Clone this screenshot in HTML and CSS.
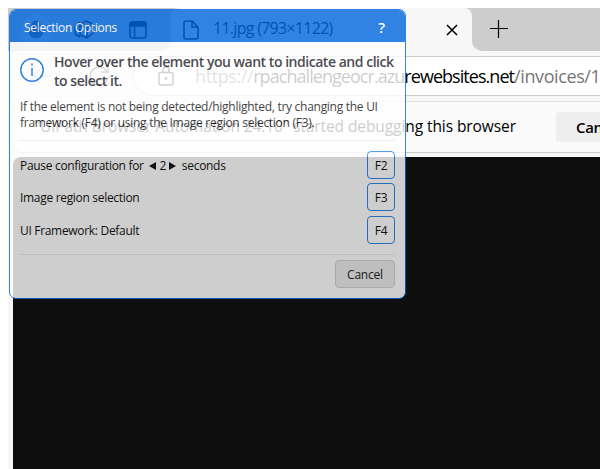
FILE: index.html
```html
<!DOCTYPE html>
<html lang="en">
<head>
<meta charset="utf-8">
<title>11.jpg (793×1122)</title>
<link rel="stylesheet" href="styles.css">
</head>
<body>
<main class="browser">
  <header class="tabs">
    <div class="tab-tools">
      <span class="avatar"><svg width="30" height="30" viewBox="0 0 30 30"><circle cx="15" cy="10" r="4.500"/><path d="M8 17q0-3 3-3h8q3 0 3 3c0 4-3 6-7 6s-7-2-7-6z"/></svg></span>
      <svg class="line-icon workspaces" width="22" height="22" viewBox="0 0 22 22"><path d="M7 6l6-4 7 3v9l-6 5-7-3zM7 6l7 3 6-4M14 9v10M2 7l5-4M2 7v8l5 3"/></svg>
      <svg class="line-icon" width="18" height="18" viewBox="0 0 18 18"><rect x="1" y="1" width="16" height="16" rx="2.500"/><path d="M1 3q0-2 2-2h12q2 0 2 2v2H1z" fill="currentColor"/><path d="M5.500 5v12"/></svg>
    </div>
    <div class="tab">
      <svg class="line-icon" width="16" height="20" viewBox="0 0 16 20"><path d="M3 1h6l6 6v10q0 2-2 2H3q-2 0-2-2V3q0-2 2-2zM9 1v6h6"/></svg>
      <span class="tab-title">11.jpg (793×1122)</span>
      <svg class="line-icon close" width="12" height="12" viewBox="0 0 12 12"><path d="M1 1l10 10M11 1L1 11"/></svg>
    </div>
    <div class="tab-rest"><svg class="line-icon" width="18" height="18" viewBox="0 0 18 18"><path d="M8.500 0v18M0 8.500h18"/></svg></div>
  </header>
  <nav class="toolbar">
    <svg class="line-icon back" width="20" height="16" viewBox="0 0 20 16"><path d="M19 8H1M8 1L1 8l7 7"/></svg>
    <svg class="line-icon reload" width="22" height="22" viewBox="0 0 22 22"><path d="M19 8A9 9 0 1 0 20 13M20 1v7h-7"/></svg>
    <div class="address">
      <svg class="line-icon" width="16" height="20" viewBox="0 0 16 20"><rect x="1" y="6.500" width="14" height="12.500" rx="2"/><path d="M5 6.500V4a3 3 0 0 1 6 0v2.500"/><circle cx="8" cy="12.500" r=".7"/></svg>
      <span class="url"><i>https://</i>rpachallengeocr.azurewebsites.net<i>/invoices/1</i></span>
    </div>
  </nav>
  <section class="infobar">
    <span class="info-text">"UiPath Browser Automation 24.10" started debugging this browser</span>
    <button class="info-cancel">Cancel</button>
  </section>
  <section class="viewport"></section>
</main>

<aside class="dialog">
  <header class="dialog-title"><span class="caption">Selection Options</span><span class="help">?</span></header>
  <div class="dialog-body">
    <div class="lead">
      <svg width="24" height="24" viewBox="0 0 24 24"><circle cx="12" cy="12" r="11.200"/><path d="M12 10v8M12 5.500v2"/></svg>
      <h1>Hover over the element you want to indicate and click<br>to select it.</h1>
    </div>
    <p class="hint">If the element is not being detected/highlighted, try changing the UI<br>framework (F4) or using the Image region selection (F3).</p>
    <div class="options">
      <div class="row"><span>Pause configuration for <svg class="arrow left" width="7" height="8" viewBox="0 0 7 8"><path d="M7 0v8L0 4z"/></svg><b>2</b><svg class="arrow right" width="7" height="8" viewBox="0 0 7 8"><path d="M0 0v8l7-4z"/></svg> seconds</span><kbd>F2</kbd></div>
      <div class="row"><span>Image region selection</span><kbd>F3</kbd></div>
      <div class="row"><span>UI Framework: Default</span><kbd>F4</kbd></div>
    </div>
    <footer><button class="cancel">Cancel</button></footer>
  </div>
</aside>
</body>
</html>
```
FILE: styles.css
```css
* { box-sizing: border-box; }
body {
  margin: 0;
  height: 469px;
  overflow: hidden;
  background: #fff;
  font-family: "Open Sans", "Noto Sans", sans-serif;
  color: #000;
}
button { font-family: inherit; color: #000; }
.browser {
  margin: 8px 0 0 8px;
  width: 592px;
  height: 461px;
  background: #f7f7f7;
  display: flex;
  flex-direction: column;
  overflow: hidden;
}
.line-icon { flex: none; fill: none; stroke: currentColor; stroke-width: 1.5; display: block; }
.tabs { display: flex; height: 43px; flex: none; background: linear-gradient(90deg, #cdcdcd 200px, transparent 200px, transparent 440px, #cdcdcd 440px) 0 0 / 100% 12px no-repeat; }
.tab-tools { width: 163px; display: flex; align-items: center; padding-left: 13px; background: #cdcdcd; border-radius: 0 0 10px 0; }
.avatar { width: 30px; height: 30px; border-radius: 50%; background: #dedede; }
.avatar svg { display: block; fill: #555; }
.tab-tools > .workspaces { margin: 0 34px 0 22px; }
.tab { width: 301px; display: flex; align-items: center; padding: 0 14px 0 12px; background: #f7f7f7; border-radius: 8px 8px 0 0; }
.tab-title { flex: 1; margin: -3px 0 0 14px; font-size: 16px; letter-spacing: -.72px; white-space: nowrap; }
.tab-rest { flex: 1; background: #cdcdcd; border-radius: 0 0 0 10px; padding: 12px 0 0 18px; }
.tab-rest .line-icon { stroke-width: 1.2; }
.toolbar { height: 53px; flex: none; display: flex; align-items: flex-start; padding: 5px 0 0 24px; }
.toolbar > .back { margin: 12px 30px 0 0; color: #bbb; }
.toolbar > .reload { margin: 8px 29px 0 6px; color: #444; }
.address { flex: none; margin-left: -6px; width: 500px; height: 40px; border: 1px solid #ccc; border-radius: 20px; background: #fff; display: flex; align-items: center; padding-left: 24px; color: #222; }
.url { margin-left: 21px; font-size: 18px; color: #000; letter-spacing: -.95px; white-space: nowrap; }
.url i { font-style: normal; color: #767676; letter-spacing: -.4px; }
.infobar { margin: -3px 0 0 5px; height: 52px; flex: none; display: flex; align-items: center; padding-left: 20px; width: 620px; background: #fafafa; border: 1px solid #e1e1e1; border-bottom-color: #ccc; border-radius: 8px; }
.info-text { width: 522px; flex: none; margin: -2px 0 0 0; white-space: nowrap; font-size: 15.5px; letter-spacing: -.08px; }
.info-cancel { flex: none; width: 90px; height: 30px; border: 0; border-radius: 4px; background: #eee; font-size: 15px; font-weight: 600; padding: 0 0 0 20px; text-align: left; letter-spacing: -.3px; }
.viewport { flex: 1; margin: 4px 0 0 5px; background: #0e0e0e; border-radius: 8px 0 0 0; }

.dialog {
  position: absolute;
  left: 9px;
  top: 9px;
  width: 397px;
  height: 290px;
  border: 1.5px solid #0067df;
  border-radius: 7px;
  background: #fff;
  opacity: .8;
  overflow: hidden;
  color: #111;
  font-size: 12px;
}
.dialog-title { height: 32px; background: #0067df; color: #fff; display: flex; justify-content: space-between; align-items: center; padding: 3px 20px 0 14px; }
.help { font-size: 15px; font-weight: 600; margin-top: -2px; }
.dialog-body { padding: 11px 10px 0; }
.lead { display: flex; gap: 10px; height: 40px; }
.lead svg { flex: none; margin-top: 5px; fill: none; stroke: #0067df; stroke-width: 1.5; }
h1 { margin: 0; font-size: 14px; line-height: 18.6px; font-weight: 600; letter-spacing: -.47px; white-space: nowrap; color: #1b2027; }
.hint { margin: 6px 0 0; height: 42px; line-height: 16px; white-space: nowrap; border-bottom: 1px solid #eaeaea; }
.options { display: grid; gap: 5px; padding-top: 10px; height: 114px; border-bottom: 1px solid #eaeaea; align-content: start; }
.row { display: flex; justify-content: space-between; align-items: center; height: 27.5px; }
.row span { padding-top: 1px; }
.row b { font-weight: 400; margin: 0 3px 0 4px; }
.arrow { fill: #111; }
.left { margin-left: 2px; }
.right { margin-right: 3px; }
kbd { width: 28px; height: 28px; border: 1.5px solid #2b87e8; border-radius: 4px; font-family: inherit; display: flex; align-items: center; justify-content: center; letter-spacing: -.2px; padding-top: 1px; }
footer { display: flex; justify-content: flex-end; padding-top: 5px; }
.cancel { width: 60px; height: 28px; border: 1px solid #d0d0d0; border-radius: 4px; background: #eaeaea; font-size: 12px; color: #222; padding: 0; letter-spacing: -.2px; }
.caption { letter-spacing: -.3px; }
.hint { letter-spacing: -.28px; }
.row span { letter-spacing: -.31px; }
```
